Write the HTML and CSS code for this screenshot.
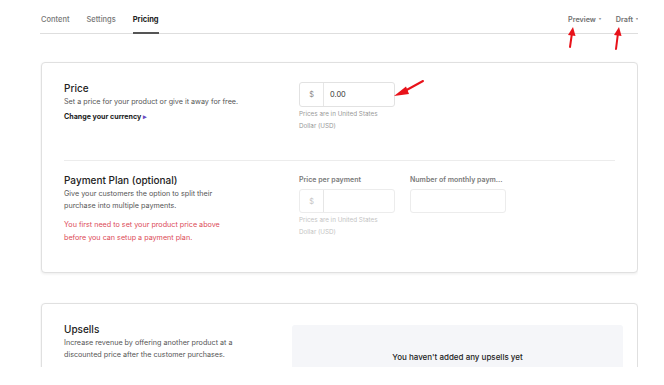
FILE: index.html
```html
<!DOCTYPE html>
<html lang="en">
<head>
    <meta charset="UTF-8">
    <meta name="viewport" content="width=device-width, initial-scale=1.0">
    <title>Pricing</title>
    <link rel="stylesheet" href="styles.css">
</head>
<body>
    <div class="page">
        <nav class="tabs">
            <div class="tab-list">
                <a class="tab">Content</a>
                <a class="tab">Settings</a>
                <a class="tab active">Pricing</a>
            </div>
            <div class="tab-actions">
                <a class="menu">Preview<span class="caret">&#9662;</span></a>
                <a class="menu">Draft<span class="caret">&#9662;</span></a>
            </div>
        </nav>

        <div class="card">
            <div class="section">
                <div class="info">
                    <h2>Price</h2>
                    <p class="desc">Set a price for your product or give it away for free.</p>
                    <a class="currency">Change your currency <span class="tri">&#9656;</span></a>
                </div>
                <div class="fields">
                    <div class="field">
                        <div class="input-group">
                            <span class="prefix">$</span>
                            <span class="value">0.00</span>
                        </div>
                        <p class="note">Prices are in United States<br>Dollar (USD)</p>
                    </div>
                </div>
            </div>
            <div class="section">
                <div class="info">
                    <h2>Payment Plan (optional)</h2>
                    <p class="desc">Give your customers the option to split their<br>purchase into multiple payments.</p>
                    <p class="warn">You first need to set your product price above<br>before you can setup a payment plan.</p>
                </div>
                <div class="fields">
                    <div class="field">
                        <label class="label">Price per payment</label>
                        <div class="input-group">
                            <span class="prefix faded">$</span>
                            <span class="value"></span>
                        </div>
                        <p class="note faded">Prices are in United States<br>Dollar (USD)</p>
                    </div>
                    <div class="field">
                        <label class="label">Number of monthly paym...</label>
                        <div class="input-box"></div>
                    </div>
                </div>
            </div>
        </div>

        <div class="card upsells">
            <div class="info">
                <h2>Upsells</h2>
                <p class="desc">Increase revenue by offering another product at a<br>discounted price after the customer purchases.</p>
            </div>
            <div class="empty">You haven't added any upsells yet</div>
        </div>
    </div>

    <svg class="arrow arrow-preview" width="12" height="22" viewBox="0 0 12 22">
        <path d="M4 21 L6 7" stroke="#e8121a" stroke-width="2" stroke-linecap="round"/>
        <path d="M2 9 L7 1 L9.5 10 Z" fill="#e8121a"/>
    </svg>
    <svg class="arrow arrow-draft" width="12" height="24" viewBox="0 0 12 24">
        <path d="M4 23 L6 7" stroke="#e8121a" stroke-width="2" stroke-linecap="round"/>
        <path d="M2 9 L7 1 L9.5 10 Z" fill="#e8121a"/>
    </svg>
    <svg class="arrow arrow-price" width="32" height="19" viewBox="0 0 32 19">
        <path d="M30 2 L10 13" stroke="#e8121a" stroke-width="2" stroke-linecap="round"/>
        <path d="M13 7.5 L1 17 L16 15 Z" fill="#e8121a"/>
    </svg>
</body>
</html>
```

FILE: styles.css
```css
* {
    box-sizing: border-box;
}
body {
    margin: 0;
    background: #fff;
    font-family: Inter, "Noto Sans", Arial, sans-serif;
    color: #2b2b2b;
    position: relative;
}
.page {
    width: 598px;
    margin-left: 40px;
    height: 367px;
    overflow: hidden;
}
h2 {
    margin: 0;
    font-size: 10px;
    line-height: 12px;
    font-weight: 500;
    color: #222;
}
p {
    margin: 0;
}

/* Tabs */
.tabs {
    display: flex;
    justify-content: space-between;
    align-items: flex-end;
    height: 34px;
    border-bottom: 1px solid #dedede;
}
.tab-list {
    display: flex;
    gap: 17px;
    padding-left: 1px;
}
.tab {
    font-size: 7.5px;
    line-height: 12px;
    font-weight: 500;
    color: #777;
    padding-bottom: 6px;
    border-bottom: 2px solid transparent;
    margin-bottom: -1px;
}
.tab.active {
    color: #222;
    font-weight: 700;
    border-bottom-color: #555;
}
.tab-actions {
    display: flex;
    gap: 15px;
}
.menu {
    font-size: 7.2px;
    line-height: 12px;
    font-weight: 600;
    color: #707070;
    padding-bottom: 7px;
}
.caret {
    margin-left: 3px;
    font-size: 4px;
    vertical-align: 2px;
    color: #999;
}

/* Cards */
.card {
    margin-top: 28px;
    margin-left: 1px;
    width: 597px;
    border: 1px solid #e0e0e0;
    border-radius: 4px;
    box-shadow: 0 1px 3px rgba(0, 0, 0, 0.08);
    background: #fff;
}
.section {
    margin: 0 22px;
    display: grid;
    grid-template-columns: 235px 1fr;
    padding: 19px 0 28px;
}
.section + .section {
    border-top: 1px solid #ececec;
    padding-top: 13px;
}
h2 + .desc {
    margin-top: 2px;
}
.desc {
    font-size: 7.2px;
    line-height: 12px;
    color: #555;
}
.currency {
    display: block;
    margin-top: 3px;
    font-size: 7.1px;
    line-height: 12px;
    font-weight: 700;
    color: #222;
}
.tri {
    color: #6a4cc2;
    font-size: 7px;
}
.warn {
    margin-top: 7px;
    font-size: 7.2px;
    line-height: 12.5px;
    color: #dc4a57;
}

/* Fields */
.fields {
    display: flex;
    gap: 15px;
}
.field {
    width: 96px;
}
.label {
    display: block;
    font-size: 7px;
    line-height: 12px;
    font-weight: 600;
    color: #7a7a7a;
    margin-bottom: 3px;
}
.input-group {
    display: flex;
    height: 25px;
    border: 1px solid #e2e2e2;
    border-radius: 3px;
    font-size: 7.4px;
}
.prefix {
    width: 24px;
    border-right: 1px solid #e6e6e6;
    display: flex;
    align-items: center;
    justify-content: center;
    color: #888;
}
.value {
    flex: 1;
    display: flex;
    align-items: center;
    padding-left: 6px;
    color: #333;
}
.input-box {
    height: 24px;
    border: 1px solid #ececec;
    border-radius: 3px;
}
.note {
    margin-top: 1px;
    font-size: 6.3px;
    line-height: 12px;
    color: #999;
}
.faded {
    color: #c4c4c4;
}
.section + .section .input-group {
    height: 24px;
    border-color: #ececec;
}

/* Upsells */
.upsells {
    margin-top: 30px;
    display: grid;
    grid-template-columns: 228px 331px;
    padding: 19px 0 0 22px;
    height: 80px;
}
.empty {
    margin-top: 2px;
    background: #f5f6f9;
    border-radius: 3px;
    height: 60px;
    padding-top: 26px;
    text-align: center;
    font-size: 8px;
    line-height: 12px;
    font-weight: 500;
    color: #222;
}

/* Annotation arrows */
.arrow {
    position: absolute;
}
.arrow-preview {
    left: 566px;
    top: 26px;
}
.arrow-draft {
    left: 612px;
    top: 26px;
}
.arrow-price {
    left: 393px;
    top: 79px;
}
```
